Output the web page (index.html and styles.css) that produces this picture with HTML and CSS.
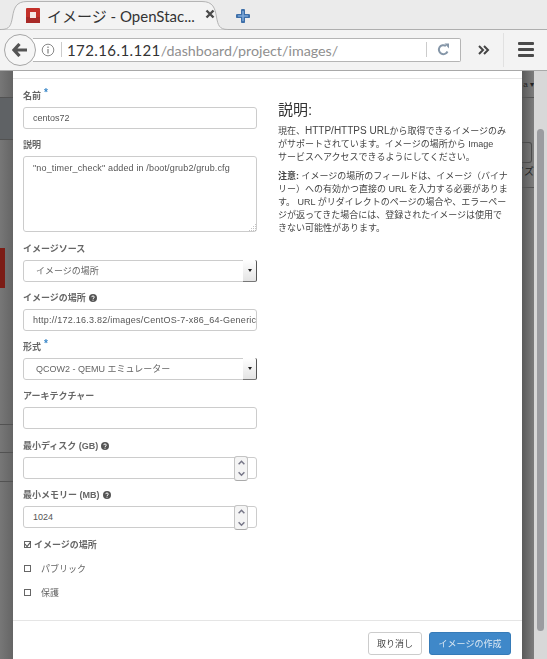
FILE: index.html
```html
<!DOCTYPE html>
<html lang="ja">
<head>
<meta charset="utf-8">
<title>イメージ - OpenStack</title>
<link rel="stylesheet" href="styles.css">
</head>
<body>
<div class="browser">
  <header class="tabbar">
    <div class="tab">
      <svg class="tab-shape" width="228" height="30" viewBox="0 0 228 30"><path d="M0 29.5C9 29.5 10 25 11.500 17C13 8 15 1.500 26 1.500H201C212 1.500 214 8 215.500 17C217 25 218 29.500 227 29.500" fill="#f3f3f3" stroke="#b4b4b4"/></svg>
      <svg class="favicon" width="15" height="15" viewBox="0 0 15 15"><rect x="1" y="0" width="14" height="15" rx="1" fill="#c3302a"/><rect x="1" y="9" width="14" height="6" fill="#a82a28"/><rect x="5" y="4" width="6" height="6" fill="#f6e6e4"/></svg>
      <span class="tab-title">イメージ - OpenStac...</span>
      <svg class="tab-close" width="10" height="10" viewBox="0 0 10 10"><path d="M1.500 1.500L8.500 8.500M8.500 1.500L1.500 8.500" stroke="#4a4a4a" stroke-width="2.400"/></svg>
    </div>
    <svg class="newtab" width="14" height="14" viewBox="0 0 14 14"><path d="M7 1.500V12.500M1.500 7H12.500" stroke="#3c6ea8" stroke-width="4" stroke-linecap="round"/><path d="M7 2.500V11.500M2.500 7H11.500" stroke="#7ba7d8" stroke-width="1.600" stroke-linecap="round"/></svg>
  </header>
  <nav class="navbar">
    <div class="back"><svg width="16" height="14" viewBox="0 0 16 14"><path d="M7.500 1L2 7L7.500 13M2.500 7H15" fill="none" stroke="#555" stroke-width="3.200"/></svg></div>
    <div class="urlbar">
      <svg class="info" width="14" height="14" viewBox="0 0 14 14"><circle cx="7" cy="7" r="5.800" fill="none" stroke="#8a8a8a"/><path d="M7 6V10.500M7 3.500V5" stroke="#8a8a8a" stroke-width="1.300"/></svg>
      <span class="url-sep"></span>
      <span class="url"><b>172.16.1.121</b>/dashboard/project/images/</span>
      <span class="reload-sep"></span>
      <svg class="reload" width="13" height="13" viewBox="0 0 13 13"><path d="M10.500 8.500A4.500 4.500 0 1 1 9 3" fill="none" stroke="#8596a8" stroke-width="2"/><path d="M7.500 0.500H12V5.500Z" fill="#8596a8"/></svg>
    </div>
    <svg class="chevrons" width="12" height="10" viewBox="0 0 12 10"><path d="M1 1L5 5L1 9M6 1L10 5L6 9" fill="none" stroke="#444" stroke-width="2"/></svg>
    <span class="nav-sep"></span>
    <div class="hamburger"><i></i><i></i><i></i></div>
  </nav>
  <main class="viewport">
    <aside class="bg-left">
      <div class="bgl bgl-a"></div>
      <div class="bgl bgl-b"></div>
      <div class="bg-red"></div>
      <div class="bgl bgl-c"></div>
      <div class="bgl bgl-d"></div>
      <div class="bgl bgl-e"></div>
    </aside>
    <section class="modal">
      <div class="modal-top"></div>
      <div class="modal-body">
        <form class="form">
          <div class="field">
            <label class="lbl">名前 <span class="req">*</span></label>
            <input class="ctl" type="text" value="centos72">
          </div>
          <div class="field">
            <label class="lbl">説明</label>
            <div class="ta">"no_timer_check" added in /boot/grub2/grub.cfg
              <svg class="grip" width="8" height="8" viewBox="0 0 8 8"><path d="M7.500 1V1.500M5.500 3V3.500M7.500 3V3.500M3.500 5V5.500M5.500 5V5.500M7.500 5V5.500M1.500 7V7.500M3.500 7V7.500M5.500 7V7.500M7.500 7V7.500" stroke="#888" stroke-width="1"/></svg>
            </div>
          </div>
          <div class="field">
            <label class="lbl">イメージソース</label>
            <div class="sel"><span>イメージの場所</span><b class="sel-btn"><i></i></b></div>
          </div>
          <div class="field">
            <label class="lbl">イメージの場所 <svg class="help" width="8" height="8" viewBox="0 0 8 8"><circle cx="4" cy="4" r="4" fill="#555"/><path d="M2.700 3.100C2.700 1.600 5.300 1.600 5.300 3.100C5.300 4 4 4 4 5M4 5.700V6.700" fill="none" stroke="#fff" stroke-width="1"/></svg></label>
            <div class="ctl ctl-clip">http://172.16.3.82/images/CentOS-7-x86_64-GenericCloud.qcow2</div>
          </div>
          <div class="field">
            <label class="lbl">形式 <span class="req">*</span></label>
            <div class="sel"><span>QCOW2 - QEMU エミュレーター</span><b class="sel-btn"><i></i></b></div>
          </div>
          <div class="field">
            <label class="lbl">アーキテクチャー</label>
            <input class="ctl" type="text">
          </div>
          <div class="field">
            <label class="lbl">最小ディスク (GB) <svg class="help" width="8" height="8" viewBox="0 0 8 8"><circle cx="4" cy="4" r="4" fill="#555"/><path d="M2.700 3.100C2.700 1.600 5.300 1.600 5.300 3.100C5.300 4 4 4 4 5M4 5.700V6.700" fill="none" stroke="#fff" stroke-width="1"/></svg></label>
            <div class="num"><div class="ctl"></div>
              <div class="spin"><svg width="13" height="12" viewBox="0 0 13 12"><path d="M3.500 7.500L6.500 4.500L9.500 7.500" fill="none" stroke="#778" stroke-width="1.600"/></svg><svg width="13" height="12" viewBox="0 0 13 12"><path d="M3.500 4.500L6.500 7.500L9.500 4.500" fill="none" stroke="#778" stroke-width="1.600"/></svg></div>
            </div>
          </div>
          <div class="field">
            <label class="lbl">最小メモリー (MB) <svg class="help" width="8" height="8" viewBox="0 0 8 8"><circle cx="4" cy="4" r="4" fill="#555"/><path d="M2.700 3.100C2.700 1.600 5.300 1.600 5.300 3.100C5.300 4 4 4 4 5M4 5.700V6.700" fill="none" stroke="#fff" stroke-width="1"/></svg></label>
            <div class="num"><div class="ctl">1024</div>
              <div class="spin"><svg width="13" height="12" viewBox="0 0 13 12"><path d="M3.500 7.500L6.500 4.500L9.500 7.500" fill="none" stroke="#778" stroke-width="1.600"/></svg><svg width="13" height="12" viewBox="0 0 13 12"><path d="M3.500 4.500L6.500 7.500L9.500 4.500" fill="none" stroke="#778" stroke-width="1.600"/></svg></div>
            </div>
          </div>
          <div class="checks">
            <div class="chk chk-bold"><span class="box"><svg width="7" height="7" viewBox="0 0 7 7"><path d="M1 3L3 5.500L7 0.500" fill="none" stroke="#555" stroke-width="1.200"/></svg></span>イメージの場所</div>
            <div class="chk"><span class="box"></span>パブリック</div>
            <div class="chk"><span class="box"></span>保護</div>
          </div>
        </form>
        <div class="desc">
          <h3>説明:</h3>
          <p>現在、<span class="lat">HTTP/HTTPS URL</span>から取得できるイメージのみがサポートされています。イメージの場所から Image <span class="nw">サービス</span>へアクセスできるようにしてください。</p>
          <p class="note"><strong>注意:</strong> イメージの場所のフィールドは、イメージ（バイナリー）への有効かつ直接の URL を入力する必要があります。 URL がリダイレクトのページの場合や、エラーページが返ってきた場合には、登録されたイメージは使用できない可能性があります。</p>
        </div>
      </div>
      <footer class="modal-foot">
        <button class="btn" type="button">取り消し</button>
        <button class="btn btn-primary" type="button">イメージの作成</button>
      </footer>
    </section>
    <aside class="bg-right">
      <div class="bgr-head"><span>a ▾</span></div>
      <div class="bgr-box"></div>
      <div class="bgr-text">イズ</div>
    </aside>
    <aside class="scroll"><div class="thumb"></div></aside>
  </main>
</div>
</body>
</html>
```
FILE: styles.css
```css
* { box-sizing: border-box; }
html, body { margin: 0; height: 100%; overflow: hidden; }
body { font-family: "Liberation Sans", "Noto Sans CJK JP", sans-serif; font-size: 9px; color: #333; }
.browser { width: 547px; height: 659px; display: flex; flex-direction: column; }

/* tab strip */
.tabbar { height: 30px; flex: none; background: #ebebeb; border-bottom: 1px solid #aeaeae; display: flex; align-items: flex-start; padding-left: 1px; }
.tab { width: 228px; height: 30px; position: relative; display: flex; align-items: center; padding: 0 0 0 24px; font-family: Lato, "Noto Sans CJK JP", sans-serif; }
.tab-shape { position: absolute; left: 0; top: 0; }
.favicon { position: relative; flex: none; }
.tab-title { position: relative; font-size: 15px; color: #333; margin-left: 7px; width: 158px; white-space: nowrap; }
.tab-close { position: relative; flex: none; margin-top: -2px; }
.newtab { margin: 9px 0 0 7px; flex: none; }

/* nav bar */
.navbar { height: 41px; flex: none; background: #f3f3f3; border-bottom: 1px solid #a9a9a9; display: flex; align-items: center; padding-left: 4px; position: relative; }
.back { width: 32px; height: 32px; flex: none; border-radius: 50%; border: 1px solid #a6a6a6; background: #f6f6f6; display: flex; align-items: center; justify-content: center; position: relative; z-index: 1; margin-right: -3px; margin-top: -1px; }
.urlbar { width: 428px; height: 24px; flex: none; margin-top: -1px; background: #fff; border: 1px solid #b5b5b5; border-left: 0; border-radius: 0 2px 2px 0; display: flex; align-items: center; padding-left: 8px; font-family: Lato, sans-serif; }
.info { flex: none; }
.url-sep { width: 1px; height: 15px; background: #ccc; margin: 0 5px 0 6px; flex: none; }
.url { font-size: 14.300px; color: #8f8f8f; white-space: nowrap; width: 280px; flex: none; margin-right: 79px; }
.url b { font-weight: 400; font-size: 15px; color: #333; letter-spacing: .4px; }
.reload-sep { width: 1px; height: 15px; background: #ccc; flex: none; margin-right: 10px; }
.reload { flex: none; }
.chevrons { margin-left: 17px; flex: none; margin-top: -1px; }
.nav-sep { width: 1px; height: 34px; background: #e1e1e1; margin-left: 13px; flex: none; }
.hamburger { margin-left: 14px; width: 16px; display: flex; flex-direction: column; gap: 3px; flex: none; margin-top: -1px; }
.hamburger i { height: 3px; background: #4a4a4a; border-radius: 1px; display: block; }

/* page */
.viewport { flex: 1; display: flex; min-height: 0; background: #d9d9d9; }
.bg-left { width: 13px; flex: none; background: linear-gradient(90deg, #777, #656565); display: flex; flex-direction: column; }
.bgl { border-bottom: 1px solid #525252; flex: none; }
.bgl-a { height: 27px; }
.bgl-b { height: 42px; background: #5f6265; }
.bg-red { width: 5px; height: 40px; background: #7c1d16; margin-top: 108px; flex: none; }
.bgl-c { height: 137px; }
.bgl-d { height: 28px; }
.bgl-e { height: 29px; }

.modal { width: 509px; flex: none; background: #fff; display: flex; flex-direction: column; }
.modal-top { height: 8px; flex: none; border-bottom: 1px solid #e5e5e5; }
.modal-body { flex: 1; display: flex; min-height: 0; padding: 10px 0 0 10px; filter: blur(.35px); }
.form { width: 234px; flex: none; display: flex; flex-direction: column; gap: 9.300px; }
.field { display: flex; flex-direction: column; }
.lbl { height: 18px; padding-bottom: 4px; line-height: 14px; font-size: 9px; font-weight: 700; color: #666; white-space: nowrap; display: flex; align-items: center; gap: 3px; }
.req { color: #3a87c8; font-size: 10px; position: relative; top: -3px; }
.help { flex: none; }
.ctl { width: 100%; height: 22px; border: 1px solid #ccc; border-radius: 3px; padding: 0 9px; font: 9px "Liberation Sans", "Noto Sans CJK JP", sans-serif; color: #555; background: #fff; line-height: 20px; display: block; outline: 0; }
.ctl-clip { white-space: nowrap; overflow: hidden; letter-spacing: .25px; }
.ta { height: 76px; border: 1px solid #ccc; border-radius: 3px; padding: 4px 9px; color: #555; line-height: 14px; position: relative; letter-spacing: .15px; }
.grip { position: absolute; right: 0; bottom: 0; }
.sel { height: 22px; border: 1px solid #ccc; border-radius: 3px; padding-left: 12px; color: #666; line-height: 20px; display: flex; justify-content: space-between; }
.sel-btn { width: 14px; margin: -1px -1px -1px 0; background: linear-gradient(#fff, #e4e4e4); border-right: 1px solid #555; border-bottom: 1px solid #777; border-radius: 0 2px 2px 0; display: flex; align-items: center; justify-content: center; }
.sel-btn i { border: 2.500px solid transparent; border-top: 3px solid #222; border-bottom: 0; }
.num { position: relative; }
.spin { position: absolute; right: 9px; top: -1px; width: 14px; height: 25px; border: 1px solid #c4c4c4; border-bottom-color: #aaa; border-radius: 3px; background: #f4f4f4; display: flex; flex-direction: column; z-index: 1; }
.spin svg { flex: 1; display: block; }
.checks { display: flex; flex-direction: column; margin-top: -5px; }
.chk { height: 24px; display: flex; align-items: center; color: #666; gap: 10px; font-size: 9px; }
.chk .box { width: 7px; height: 7px; border: 1px solid #666; flex: none; margin-left: 1px; background: #fff; display: block; }
.chk .box svg { display: block; margin: -1px; }
.chk-bold { gap: 3px; font-weight: 700; }

.desc { flex: 1; min-width: 0; padding: 0 11px 0 21px; color: #444; }
.desc h3 { font-size: 15px; font-weight: 400; margin: 11px 0 5px; line-height: 20px; color: #333; }
.desc p { margin: 0 0 6px; line-height: 13px; }
.desc strong { font-weight: 700; }
.lat { font-size: 10px; line-height: 1; }
.nw { white-space: nowrap; }

.modal-foot { height: 40px; flex: none; border-top: 1px solid #e5e5e5; display: flex; justify-content: flex-end; gap: 7px; padding: 11px 11px 0 0; align-items: flex-start; margin-bottom: -1px; }
.btn { height: 23px; border: 1px solid #ccc; border-radius: 3px; background: #fff; color: #444; font: 9px "Liberation Sans", "Noto Sans CJK JP", sans-serif; padding: 0; width: 54px; filter: blur(.3px); }
.btn-primary { width: 82px; background: #3f88c9; border-color: #367bb8; color: #dbe8f3; }

.bg-right { width: 12px; flex: none; background: linear-gradient(90deg, #5a5a5a, #7d7d7d); overflow: hidden; font-size: 10px; color: #222; display: flex; flex-direction: column; }
.bgr-head { height: 27px; border-bottom: 1px solid #555; padding-top: 9px; line-height: 10px; white-space: nowrap; flex: none; font-size: 8px; text-align: right; }
.bgr-box { height: 21px; width: 10px; flex: none; margin-top: 44px; border: 1px solid #4c4c4c; border-left: 0; border-radius: 0 3px 3px 0; }
.bgr-text { height: 25px; border-bottom: 1px solid #555; white-space: nowrap; line-height: 18px; flex: none; display: flex; justify-content: flex-end; }

.scroll { width: 13px; flex: none; background: #d8d8d8; padding: 58px 3px 0; }
.thumb { width: 7px; height: 502px; background: #9b9ca0; border-radius: 4px; }
```
